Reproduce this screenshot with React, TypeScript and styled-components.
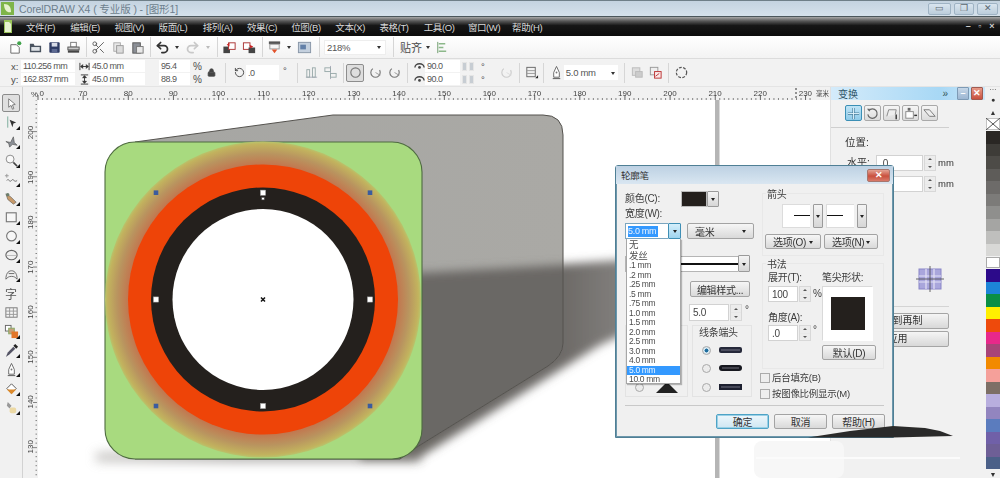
import React from "react";
import styled, { createGlobalStyle } from "styled-components";
import { Scissors, Undo2, Redo2, Lock, RotateCcw } from "lucide-react";

const CJK = `"Liberation Sans", "Noto Sans CJK SC", sans-serif`;

const Global = createGlobalStyle`
  html, body { margin: 0; padding: 0; background: #fff; overflow: hidden; }
  #root { width: 1000px; height: 478px; }
  * { box-sizing: border-box; }
`;

const Shell = styled.div`
  position: relative; width: 1000px; height: 478px; overflow: hidden;
  display: flex; flex-direction: column;
  font-family: ${CJK}; font-size: 10px; color: #444;
  filter: blur(0.4px);
`;

/* ---------- title + menu ---------- */
const TitleBar = styled.div`
  height: 17px; flex: none; display: flex; align-items: center;
  padding: 0 2px 0 1px;
  border-top: 1px solid #6f7f88; border-bottom: 1px solid #4b565b;
  background: linear-gradient(#c4d3e0, #d5e1eb);
`;
const AppLogo = styled.svg` width: 13px; height: 13px; flex: none; `;
const TitleText = styled.span` margin-left: 5px; font-size: 10.5px; color: #6d7f8d; flex: 1; letter-spacing: -.1px; `;
const WinBtn = styled.div<{ $w: number }>`
  width: ${p => p.$w}px; height: 12px; margin-left: 3px; border: 1px solid #9fb3c4; border-radius: 2px;
  background: linear-gradient(#d9e5ef, #bccddb); color: #5b6770;
  display: flex; align-items: center; justify-content: center; font-size: 9px; line-height: 1;
`;
const MenuBar = styled.div`
  height: 19px; flex: none; display: flex; align-items: center; padding-left: 4px;
  background: linear-gradient(#a8a8a8 0, #555 22%, #161616 45%, #0c0c0c 100%);
  color: #d8d8d8; font-size: 9.5px; letter-spacing: -.4px;
`;
const MenuLogo = styled.svg` width: 8px; height: 13px; margin-right: 6px; flex: none; `;
const MenuItem = styled.span`
  width: 44.2px; flex: none; white-space: nowrap; margin-left: 0;
  &:first-of-type { margin-left: 8px; }
`;
const MenuRight = styled.div`
  margin-left: auto; display: flex; gap: 8px; padding-right: 6px; color: #ccc; font-size: 9px; font-weight: bold; line-height: 1;
`;

/* ---------- toolbars ---------- */
const Toolbar = styled.div`
  height: 23px; flex: none; display: flex; align-items: center; padding-left: 5px;
  background: linear-gradient(#fff, #f3f3f3); border-bottom: 1px solid #dcdcdc;
`;
const PropBar = styled.div`
  height: 28px; flex: none; display: flex; align-items: center; padding-left: 11px;
  background: #f2f2f2; border-bottom: 1px solid #e4e4e4;
`;
const Tool = styled.div<{ $w?: number; $active?: boolean }>`
  width: ${p => p.$w ?? 19}px; height: 18px; flex: none;
  display: flex; align-items: center; justify-content: center;
  ${p => p.$active ? "border: 1px solid #8d8d8d; border-radius: 2px; background: #dedede;" : ""}
`;
const Sep = styled.div<{ $w: number }>`
  width: ${p => p.$w}px; height: 20px; flex: none; position: relative;
  &::after { content: ""; position: absolute; left: 50%; top: 0; bottom: 0; width: 1px; background: #d6d6d6; }
`;
const Caret = styled.div<{ $w?: number; $light?: boolean }>`
  width: ${p => p.$w ?? 10}px; height: 14px; flex: none; display: flex; align-items: center; justify-content: center;
  &::after { content: ""; border: 2.5px solid transparent; border-top: 3px solid ${p => p.$light ? "#bbb" : "#333"}; margin-top: 3px; }
`;
const ZoomCombo = styled.div<{ $w?: number; $plain?: boolean }>`
  width: ${p => p.$w ?? 62}px; height: 15px; flex: none; background: #fff; border: ${p => p.$plain ? "0" : "1px solid #eee"};
  display: flex; align-items: center; justify-content: space-between; padding-left: 2px; font-size: 9.5px; color: #555; letter-spacing: -.3px;
`;
const Label = styled.span<{ $w?: number; $size?: number; $color?: string; $ml?: number; $lift?: number }>`
  ${p => p.$w ? `width: ${p.$w}px;` : ""} flex: none; white-space: nowrap;
  font-size: ${p => p.$size ?? 9.5}px; color: ${p => p.$color ?? "#4b4b4b"};
  margin-left: ${p => p.$ml ?? 0}px; margin-bottom: ${p => p.$lift ?? 0}px;
`;
const Stack = styled.div` display: flex; flex-direction: column; gap: 1px; flex: none; `;
const Row = styled.div<{ $ml?: number }>` display: flex; align-items: center; height: 12px; ${p => p.$ml ? `margin-left:${p.$ml}px;` : ""} `;
const Field = styled.div<{ $w: number; $h?: number }>`
  width: ${p => p.$w}px; height: ${p => p.$h ?? 12}px; flex: none; background: #fff; padding-left: 2px;
  display: flex; align-items: center; justify-content: space-between; white-space: nowrap; font-size: 9px; letter-spacing: -.5px; color: #555;
`;
const Gap = styled.div<{ $w: number }>` width: ${p => p.$w}px; flex: none; `;
const MiniSpin = styled.div`
  width: 5px; height: 9px; margin-left: 2px; flex: none; background: #c7cdd3; border: 1px solid #e5e5e5;
`;

/* ---------- workspace ---------- */
const Main = styled.div` flex: 1; display: flex; min-height: 0; `;
const Toolbox = styled.div`
  width: 23px; flex: none; background: #f1f1f1; border-right: 1px solid #d2d2d2;
  padding-top: 7px; display: flex; flex-direction: column; align-items: center;
`;
const Slot = styled.div<{ $fly?: boolean; $active?: boolean }>`
  width: 18px; height: 19px; flex: none; position: relative; display: flex; align-items: center; justify-content: center;
  ${p => p.$active ? "border: 1px solid #8b8b8b; background: #dfdfdf; border-radius: 2px; height: 18px; margin-bottom: 1px;" : ""}
  ${p => p.$fly ? `&::after { content: ""; position: absolute; right: 0; bottom: 2px; border: 2px solid transparent; border-right-color: #111; border-bottom-color: #111; }` : ""}
`;
const Work = styled.div` flex: 1; display: flex; flex-direction: column; min-width: 0; `;
const RulerTop = styled.svg` width: 807px; height: 13px; flex: none; display: block; background: #f1f1f1; `;
const WorkBody = styled.div` flex: 1; display: flex; min-height: 0; `;
const RulerLeft = styled.svg` width: 15px; height: 378px; flex: none; display: block; background: #f1f1f1; `;
const Canvas = styled.svg` width: 792px; height: 378px; flex: none; display: block; background: #fff; `;

const Dock = styled.div`
  width: 155px; flex: none; background: #f1f1f1; display: flex; flex-direction: column; border-left: 1px solid #e0e0e0;
`;
const DockHead = styled.div`
  height: 13px; flex: none; display: flex; align-items: center; padding-left: 7px;
  background: linear-gradient(90deg, #d4ebfa, #a8d8f5 70%, #cbe6f8);
  font-size: 10px; color: #2f5568;
`;
const DockName = styled.span` flex: 1; `;
const DockBtn = styled.div<{ $red?: boolean }>`
  width: 12px; height: 13px; margin-left: 2px; flex: none; border-radius: 1px; border: 1px solid ${p => p.$red ? "#a05a50" : "#7d9ab5"};
  background: ${p => p.$red ? "linear-gradient(#e89a88,#c8503f)" : "linear-gradient(#c6d7e8,#9cb6d2)"};
  color: #fff; display: flex; align-items: center; justify-content: center; font-size: 9px; line-height: 1; font-weight: bold;
`;
const DockTabs = styled.div`
  display: flex; gap: 2px; padding: 5px 0 6px 14px; margin: 0 36px 0 0; border-bottom: 1px solid #cfcfcf;
`;
const DockTab = styled.div<{ $on?: boolean }>`
  width: 17px; height: 16px; flex: none; border-radius: 2px; display: flex; align-items: center; justify-content: center;
  border: 1px solid ${p => p.$on ? "#3b8fb5" : "#a9a9a9"}; background: ${p => p.$on ? "linear-gradient(#bfe4f6,#8fcbe9)" : "linear-gradient(#f5f5f5,#dcdcdc)"};
`;
const DockTitle = styled.div` margin: 6px 0 0 14px; font-size: 10.5px; color: #333; line-height: 16px; `;
const DockRow = styled.div` display: flex; align-items: center; height: 16px; margin: 5px 0 0 16px; font-size: 10px; color: #333; `;
const DockTarget = styled.div` height: 86px; flex: none; display: flex; justify-content: flex-end; padding: 74px 41px 0 0; `;
const DockRule = styled.div` height: 1px; margin: 28px 36px 0 20px; background: #d4d4d4; flex: none; `;
const DockButton = styled.div`
  height: 16px; margin: 6px 36px 0 15px; border: 1px solid #a5a5a5; border-radius: 2px;
  background: linear-gradient(#f5f5f5,#d8d8d8); font-size: 10px; color: #333; line-height: 14px; white-space: nowrap; text-align: center;
  & + & { margin-top: 2px; }
`;
const Palette = styled.div`
  width: 15px; flex: none; background: #f1f1f1; display: flex; flex-direction: column; align-items: stretch; padding-left: 1px;
`;
const Swatch = styled.div<{ $c: string; $h?: number; $white?: boolean }>`
  height: ${p => p.$h ?? 12.5}px; flex: none; background: ${p => p.$c};
  ${p => p.$white ? "margin: 1px 0; border: 1px solid #aaa;" : ""}
`;
const PalBtn = styled.div<{ $h: number }>`
  height: ${p => p.$h}px; flex: none; display: flex; align-items: center; justify-content: center; color: #333; font-size: 7px; line-height: 1;
`;
const NoColor = styled.svg` width: 14px; height: 12px; display: block; flex: none; margin-bottom: 1px; `;

/* ---------- dialog ---------- */
const Dialog = styled.div`
  position: absolute; left: 615px; top: 165px; width: 279px; height: 273px;
  background: #f0f0f0; border: 1px solid #4f7f95; border-radius: 3px 3px 0 0;
  box-shadow: 0 0 0 1px #6d97ab inset; display: flex; flex-direction: column; color: #3d3d3d; letter-spacing: -.3px;
`;
const DlgTitle = styled.div`
  height: 18px; flex: none; display: flex; align-items: center; justify-content: space-between; padding: 0 3px 0 5px;
  background: linear-gradient(#bdd1e3, #d9e6f1); font-size: 9.5px; color: #333;
`;
const DlgClose = styled.div`
  width: 23px; height: 13px; border-radius: 2px; border: 1px solid #a7766e; background: linear-gradient(#e4a394, #c9503e 55%, #d97a6a);
  color: #fff; font-size: 9px; font-weight: bold; display: flex; align-items: center; justify-content: center; line-height: 1;
`;
const DlgBody = styled.div` flex: 1; display: flex; position: relative; padding: 7px 0 0 9px; `;
const Left = styled.div` width: 137px; flex: none; display: flex; flex-direction: column; `;
const Right = styled.div` width: 122px; flex: none; display: flex; flex-direction: column; margin-top: 2px; `;
const DRow = styled.div<{ $h: number; $mt?: number; $ml?: number; $gap?: number; $top?: boolean }>`
  display: flex; align-items: ${p => p.$top ? "flex-start" : "center"}; flex: none; height: ${p => p.$h}px;
  margin-top: ${p => p.$mt ?? 0}px; margin-left: ${p => p.$ml ?? 0}px; gap: ${p => p.$gap ?? 0}px;
`;
const DText = styled.span<{ $w?: number; $size?: number; $ml?: number; $mt?: number; $lift?: number; $lh?: number }>`
  ${p => p.$w ? `width:${p.$w}px;` : ""} flex: none; font-size: ${p => p.$size ?? 10}px; white-space: nowrap;
  line-height: ${p => p.$lh ? `${p.$lh}px` : 1};
  margin-left: ${p => p.$ml ?? 0}px; margin-top: ${p => p.$mt ?? 0}px; margin-bottom: ${p => p.$lift ?? 0}px;
`;
const ColorWell = styled.div`
  width: 26px; height: 16px; flex: none; background: #24201d; border: 1px solid #bbb;
`;
const DropBtn = styled.div<{ $w?: number; $h?: number; $hot?: boolean }>`
  width: ${p => p.$w ?? 12}px; height: ${p => p.$h ?? 16}px; flex: none; display: flex; align-items: center; justify-content: center;
  border: 1px solid ${p => p.$hot ? "#3f8fb5" : "#9a9a9a"}; border-radius: 1px;
  background: ${p => p.$hot ? "linear-gradient(#d5effb,#9fd4ee)" : "linear-gradient(#f4f4f4,#d6d6d6)"};
  &::after { content: ""; border: 2.5px solid transparent; border-top: 3px solid #222; margin-top: 3px; }
`;
const WidthInput = styled.div`
  width: 43px; height: 16px; flex: none; background: #fff; border: 1px solid #7aa5bf; border-right: 0; padding: 2px 0 0 2px;
`;
const Hilite = styled.span` background: #3399ff; color: #e8f3ff; font-size: 9px; line-height: 11px; display: block; width: 30px; white-space: nowrap; `;
const Btn = styled.div<{ $w: number; $h?: number; $primary?: boolean; $between?: boolean; $mt?: number }>`
  width: ${p => p.$w}px; height: ${p => p.$h ?? 15}px; flex: none; border-radius: 2px; padding: 0 7px;
  margin-top: ${p => p.$mt ?? 0}px;
  border: 1px solid ${p => p.$primary ? "#4ea3c6" : "#a3a3a3"};
  background: ${p => p.$primary ? "linear-gradient(#edf7fc,#cfe6f2)" : "linear-gradient(#f6f6f6,#d9d9d9)"};
  display: flex; align-items: center; justify-content: ${p => p.$between ? "space-between" : "center"};
  font-size: 10px; color: #333; white-space: nowrap;
  ${p => p.$primary ? "box-shadow: 0 0 0 1px #9ad0e6 inset;" : ""}
`;
const MiniCaret = styled.i`
  border: 2.5px solid transparent; border-top: 3px solid #222; margin-top: 3px; display: block; width: 0; height: 0;
`;
const LineField = styled.div`
  width: 113px; height: 16px; flex: none; background: #fff; border: 1px solid #b5b5b5; border-right: 0; display: flex; align-items: center;
  &::after { content: ""; display: block; width: 100%; height: 2px; background: #111; }
`;
const TextBox = styled.div<{ $w: number; $h?: number }>`
  width: ${p => p.$w}px; height: ${p => p.$h ?? 16}px; flex: none; background: #fff; border: 1px solid #d2d2d2;
  padding-left: 3px; font-size: 10px; display: flex; align-items: center; color: #444;
`;
const Spin = styled.div<{ $h?: number }>`
  width: 12px; height: ${p => p.$h ?? 16}px; flex: none; display: flex; flex-direction: column; gap: 1px; background: #e8e8e8; border: 1px solid #d8d8d8;
  margin-left: 1px;
`;
const SpinPart = styled.i<{ $down?: boolean }>`
  flex: 1; display: flex; align-items: center; justify-content: center; background: #ececec;
  &::after { content: ""; border: 2px solid transparent; ${p => p.$down ? "border-top: 2px solid #555; margin-top: 2px;" : "border-bottom: 2px solid #555; margin-bottom: 2px;"} }
`;
const Bottoms = styled.div` display: flex; margin-top: 4px; height: 72px; flex: none; gap: 4px; `;
const Box = styled.div<{ $w: number }>`
  width: ${p => p.$w}px; flex: none; border: 1px solid #e3e3e3; position: relative; display: flex; flex-direction: column; align-items: center;
`;
const BoxLegend = styled.span`
  position: absolute; left: 5px; top: 1px; background: #f0f0f0; padding: 0 1px; font-size: 10px; line-height: 12px; white-space: nowrap;
`;
const CapRow = styled.div<{ $mt: number; $gap?: number }>` display: flex; align-items: center; gap: ${p => p.$gap ?? 8}px; margin-top: ${p => p.$mt}px; height: 12px; flex: none; `;
const Radio = styled.div<{ $on?: boolean }>`
  width: 9px; height: 9px; flex: none; border-radius: 50%; border: 1px solid #a8a8a8; background: ${p => p.$on ? "radial-gradient(#1e6d9e 35%, #d7e8f1 45%)" : "#ececec"};
`;
const Cap = styled.svg` width: 23px; height: 7px; display: block; flex: none; `;
const ArrowCell = styled.div`
  width: 28px; height: 24px; flex: none; background: #fff; border: 1px solid #dcdcdc; border-right: 0; display: flex; align-items: center; justify-content: flex-end;
  &::after { content: ""; display: block; width: 16px; height: 1.5px; background: #111; }
`;
const ArrowCellR = styled(ArrowCell)` justify-content: flex-start; `;
const Group = styled.div<{ $h: number; $mt?: number }>`
  height: ${p => p.$h}px; flex: none; border: 1px solid #e8e8e8; position: relative; padding: 8px 2px 0; display: flex; flex-direction: column;
  margin-top: ${p => p.$mt ?? 0}px;
`;
const Legend = styled.span`
  position: absolute; left: 3px; top: -5px; background: #f0f0f0; font-size: 10px; padding: 0 1px; line-height: 12px;
`;
const NibCol = styled.div` display: flex; flex-direction: column; width: 54px; flex: none; `;
const ValCol = styled.div` display: flex; flex-direction: column; width: 57px; flex: none; `;
const Nib = styled.div`
  width: 51px; height: 55px; flex: none; margin-top: 2px; background: #fff; border: 1px solid #d9d9d9; border-right-color: #fff; border-bottom-color: #fff; display: flex; align-items: center; justify-content: center;
  &::after { content: ""; display: block; width: 34px; height: 33px; background: #24201d; }
`;
const CheckRow = styled(DRow)` margin-left: -2px; `;
const Check = styled.div` width: 10px; height: 10px; flex: none; border: 1px solid #ababab; background: #eee; `;
const DlgRule = styled.div` height: 1px; flex: none; margin: 0 9px 0 9px; background: #c9c9c9; `;
const DlgFoot = styled.div` height: 31px; flex: none; display: flex; justify-content: flex-end; gap: 5px; padding: 8px 8px 0 0; `;
const List = styled.div`
  position: absolute; left: 10px; top: 55px; width: 55px; height: 145px; background: #fff; border: 1px solid #a7a7a7; border-width: 0 1px 1px 1px;
  box-shadow: 1px 1px 1px rgba(0,0,0,.25); padding-top: 1px; font-size: 8.5px; letter-spacing: -.35px; color: #4d4d4d;
`;
const ListItem = styled.div<{ $sel?: boolean; $big?: boolean }>`
  height: ${p => p.$big ? 10.5 : 9.5}px; line-height: ${p => p.$big ? 10.5 : 9.5}px; padding-left: 2px; white-space: nowrap;
  font-size: ${p => p.$big ? 9.5 : 8.5}px;
  ${p => p.$sel ? "background: #3399ff; color: #eaf5ff;" : ""}
`;
const Ink = styled.svg` position: absolute; left: 740px; top: 420px; width: 230px; height: 58px; pointer-events: none; `;

/* ---------- icons ---------- */
const S = styled.svg<{ $s?: number; $turn?: boolean }>`
  width: ${p => p.$s ?? 15}px; height: ${p => p.$s ?? 15}px; display: block; flex: none;
  ${p => p.$turn ? "transform: rotate(90deg);" : ""}
`;
const Ic = ({ children, s }: { children: React.ReactNode; s?: number }) => <S $s={s} viewBox="0 0 16 16">{children}</S>;

const New = () => <Ic><path d="M3 5h6l3 3v6H3z" fill="#fff" stroke="#666" /><circle cx="12" cy="3.5" r="2.2" fill="#3fa34a" /></Ic>;
const Open = () => <Ic><path d="M2 13V4h4l1 2h7v7z" fill="#48525e" /><rect x="3.5" y="7.5" width="9" height="4" fill="#dfe3e7" /></Ic>;
const Save = () => <Ic><rect x="2.5" y="2.5" width="11" height="11" rx="1" fill="#2d3a63" /><rect x="5" y="3" width="6" height="4" fill="#d7dbe6" /><rect x="5" y="9.5" width="6" height="4" fill="#5d6a92" /></Ic>;
const Print = () => <Ic><rect x="5" y="2.5" width="6" height="5" fill="#fff" stroke="#777" /><rect x="2" y="7.5" width="12" height="3" fill="#c9c9c9" stroke="#555" /><rect x="2" y="11" width="12" height="2.5" fill="#444" /></Ic>;
const Copy = () => <Ic><rect x="3" y="3" width="7" height="9" fill="#e9e9e9" stroke="#aaa" /><rect x="6" y="6" width="7" height="8" fill="#dcdcdc" stroke="#999" /></Ic>;
const Paste = () => <Ic><rect x="3" y="3" width="8" height="11" fill="#8b8f96" stroke="#555" /><rect x="7" y="7" width="7" height="7" fill="#e9e9e9" stroke="#777" /></Ic>;
const Imp = () => <Ic><rect x="1.5" y="7" width="7" height="7" fill="#444" /><rect x="7" y="3" width="7" height="7" fill="#fff" stroke="#a33" /><path d="M5 5l3-2v4z" fill="#c22" /></Ic>;
const Exp = () => <Ic><rect x="1.5" y="3" width="7" height="7" fill="#fff" stroke="#a33" /><rect x="7" y="8" width="7" height="6" fill="#444" /><path d="M8 5l4 2-3 2z" fill="#c22" /></Ic>;
const Pub = () => <Ic><rect x="2" y="1.5" width="12" height="3" fill="#555" /><rect x="3" y="4.5" width="10" height="5" fill="#f6f6f6" stroke="#999" /><path d="M5 10h6l-3 4z" fill="#e2522c" /></Ic>;
const Welcome = () => <Ic><rect x="1.5" y="2.5" width="13" height="11" fill="#c4d0de" stroke="#8795a6" /><rect x="3.5" y="5" width="6" height="5" fill="#6380a8" /></Ic>;
const Snap = () => <Ic><path d="M4 2v12" stroke="#6d9a6a" /><path d="M5 4h7M5 8h5M5 12h8" stroke="#8cb88a" strokeWidth="1.4" /></Ic>;
const Align = () => <Ic><path d="M2 13h12" stroke="#aab" /><rect x="3" y="5" width="3" height="8" fill="none" stroke="#9aa" /><rect x="9" y="3" width="3" height="10" fill="none" stroke="#9aa" /></Ic>;
const Dist = () => <Ic><path d="M8 1v14" stroke="#aab" /><rect x="2" y="3" width="6" height="4" fill="none" stroke="#9aa" /><rect x="8" y="9" width="6" height="4" fill="none" stroke="#9aa" /></Ic>;
const Ring = ({ dash, light }: { dash?: boolean; light?: boolean }) => <Ic><circle cx="8" cy="8" r="5" fill="none" stroke={light ? "#ccc" : "#777"} strokeWidth="1.2" strokeDasharray={dash ? "20 8" : undefined} />{dash && <path d="M8 8l5 3" stroke={light ? "#ddd" : "#999"} />}</Ic>;
const WH = ({ v }: { v?: boolean }) => <S $s={11} $turn={v} viewBox="0 0 12 12"><path d="M1 2v8M11 2v8M2 6h8M2 6l2-2v4zM10 6l-2-2v4z" stroke="#333" fill="#333" /></S>;
const Eye = () => <S $s={11} viewBox="0 0 12 12"><path d="M1 7a5 4 0 0 1 10 0" fill="none" stroke="#444" strokeWidth="1.5" /><circle cx="6" cy="7" r="1.5" fill="#444" /></S>;
const Frame = () => <Ic><rect x="3" y="2.5" width="9" height="10" fill="none" stroke="#666" /><path d="M3 6h9M3 9h9" stroke="#999" /><path d="M12 14h3v-3z" fill="#222" /></Ic>;
const Pen = () => <Ic><path d="M8 1.5L11 8v5H5V8z" fill="#fff" stroke="#666" /><path d="M4 14.5h8" stroke="#555" /><circle cx="8" cy="8" r="1" fill="#777" /></Ic>;
const Shap1 = () => <Ic><rect x="2.5" y="3" width="8" height="8" fill="#ddd" stroke="#bbb" /><rect x="6" y="7" width="7" height="6" fill="#ccc" stroke="#bbb" /></Ic>;
const Shap2 = () => <Ic><rect x="2.5" y="2.5" width="8" height="8" fill="#eee" stroke="#999" /><rect x="7" y="7" width="7" height="7" fill="#fbe6e6" stroke="#b33" /><path d="M8 12l4-3" stroke="#b33" /></Ic>;
const Contour = () => <Ic><circle cx="8" cy="8" r="5.5" fill="none" stroke="#555" strokeWidth="1.3" strokeDasharray="3 1.5" /></Ic>;

const Pick = () => <Ic><path d="M5 3l7 6-3 .5 1.5 4-1.5.6L7.5 10 5 12z" fill="#fff" stroke="#777" /></Ic>;
const Shape = () => <Ic><path d="M4 1.5v12" stroke="#7a9" /><path d="M6 5l7 3-3 1-1 4z" fill="#333" /></Ic>;
const Crop = () => <Ic><path d="M2 8l5 1 3-6 1 6 3 3-5-1-3 3-1-4z" fill="#8b8f96" stroke="#444" strokeWidth=".6" /></Ic>;
const Zoom = () => <Ic><circle cx="6.5" cy="6.5" r="4.2" fill="#f9f9f9" stroke="#888" /><path d="M10 10l4 4" stroke="#444" strokeWidth="1.6" /></Ic>;
const Free = () => <Ic><path d="M1 4h4M3 2v4" stroke="#999" /><path d="M3 9c2-3 3 3 5 0s3 3 6 0" fill="none" stroke="#666" /></Ic>;
const Smart = () => <Ic><path d="M2 3l5 3 6 6-3 2-6-5z" fill="#c79a6a" stroke="#555" strokeWidth=".6" /><circle cx="4" cy="4" r="1.8" fill="#6b7d6b" /></Ic>;
const Rect = () => <Ic><rect x="2.5" y="3" width="10.5" height="9.5" fill="#f7f7f7" stroke="#777" strokeWidth="1.2" /></Ic>;
const Ell = () => <Ic><circle cx="8" cy="7.5" r="5.2" fill="#f7f7f7" stroke="#777" strokeWidth="1.2" /></Ic>;
const Poly = () => <Ic><ellipse cx="8" cy="7.5" rx="6" ry="5" fill="#f0f0f0" stroke="#666" strokeWidth="1.2" /><path d="M3 8h10" stroke="#bbb" /></Ic>;
const Basic = () => <Ic><path d="M2 13c0-5 2-9 6-9s6 4 6 9c-2-2-3-3-6-3s-4 1-6 3z" fill="none" stroke="#666" /><path d="M5 7h6" stroke="#666" /></Ic>;
const Grid = () => <Ic><rect x="2" y="3" width="12" height="10" fill="#f4f4f4" stroke="#777" /><path d="M6 3v10M10 3v10M2 6.5h12M2 10h12" stroke="#999" /></Ic>;
const Blend = () => <Ic><rect x="1.5" y="1.5" width="6" height="6" fill="#fff" stroke="#666" /><rect x="5" y="4.5" width="6" height="6" fill="#c6a07a" stroke="#8a6" /><rect x="8" y="8" width="7" height="7" fill="#e2762a" /></Ic>;
const Dropper = () => <Ic><path d="M2 15l2-5 6-6 2 2-6 6z" fill="#556" /><path d="M10 3l2-2 3 3-2 2z" fill="#222" /></Ic>;
const Fill = () => <Ic><path d="M3 8l5-5 5 5-5 5z" fill="#fff" stroke="#555" /><path d="M3 9l5 5 5-5z" fill="#dc8a2c" /></Ic>;
const IFill = () => <Ic><path d="M4 2l4 4-2 3-3-3z" fill="#999" /><rect x="6" y="8" width="7" height="6" rx="2" fill="#ecd9a4" /></Ic>;
const Zi = () => <Label $size={12} $color="#555">字</Label>;

const TabMove = () => <Ic><path d="M8 2v12M2 8h12" stroke="#4b7f9c" strokeWidth="2.4" /><path d="M8 2v12M2 8h12" stroke="#dff2fb" strokeWidth="1" /></Ic>;
const TabRot = () => <Ic><path d="M4 5a5 5 0 1 1-1 4" fill="none" stroke="#666" strokeWidth="1.3" /><path d="M2 3l3 0 0 3z" fill="#666" /></Ic>;
const TabSca = () => <Ic><path d="M3 11l2-7h8l-1 5" fill="#eee" stroke="#888" /><path d="M13 9v5" stroke="#333" strokeWidth="1.5" /></Ic>;
const TabSize = () => <Ic><rect x="3" y="6" width="8" height="7" fill="#fff" stroke="#888" /><rect x="5" y="2" width="3" height="3" fill="#666" /><path d="M12 10h3" stroke="#333" strokeWidth="1.5" /></Ic>;
const TabSkew = () => <Ic><path d="M2 4h6l6 7H8z" fill="#eee" stroke="#777" /></Ic>;

const menus = ["文件(F)", "编辑(E)", "视图(V)", "版面(L)", "排列(A)", "效果(C)", "位图(B)", "文本(X)", "表格(T)", "工具(O)", "窗口(W)", "帮助(H)"];
const sizes = ["无", "发丝", ".1 mm", ".2 mm", ".25 mm", ".5 mm", ".75 mm", "1.0 mm", "1.5 mm", "2.0 mm", "2.5 mm", "3.0 mm", "4.0 mm", "5.0 mm", "10.0 mm"];
const grays = ["#2a2724", "#3e3c38", "#4d4b47", "#5e5c59", "#6d6b69", "#7c7b79", "#8f8f8d", "#a5a5a3", "#bfbfbd", "#d8d8d6"];
const colors = ["#2c0a8a", "#1d84d8", "#0a8f45", "#ffef00", "#ee4a0c", "#e8288a", "#a84478", "#f28a00", "#f5a09a", "#7d6f66", "#b8aede", "#9285bf", "#5b7cbe", "#7060a8", "#6e5f96", "#4b6088"];

const tools: [React.ComponentType, boolean][] = [
  [Pick, false], [Shape, true], [Crop, true], [Zoom, true], [Free, true], [Smart, true], [Rect, true], [Ell, true], [Poly, true],
  [Basic, true], [Zi, false], [Grid, false], [Blend, true], [Dropper, true], [Pen, true], [Fill, true], [IFill, true],
];

const hx = (v: number) => 82 + 4.515 * (v - 70);
const topLabels = [70, 80, 90, 100, 110, 120, 130, 140, 150, 160, 170, 180, 190, 200, 210, 220, 230];
const sideLabels = [200, 190, 180, 170, 160, 150, 140, 130];
const sy = (v: number) => 132.5 + 4.49 * (200 - v);

function TopRuler() {
  const ticks: React.ReactNode[] = [];
  for (let i = 0; i < 180; i++) {
    const x = 37 + i * 4.515;
    if (x > 812) break;
    const major = i % 10 === 0;
    ticks.push(<line key={i} x1={x} x2={x} y1={major ? 95 : 98} y2={100} stroke="#555" strokeWidth={major ? 0.9 : 0.7} />);
  }
  return (
    <RulerTop viewBox="22 87 807 13">
      <text x={30} y={97} fontSize={8} fill="#444">%</text>
      <text x={38.5} y={95.5} fontSize={8} fill="#444">0</text>
      {ticks}
      {topLabels.map(v => <text key={v} x={hx(v)} y={95.5} fontSize={8} fill="#444" textAnchor="middle">{v}</text>)}
      <line x1={795} x2={795} y1={88} y2={100} stroke="#333" strokeDasharray="2 2" />
      <text x={815} y={96} fontSize={6.5} fill="#444">毫米</text>
    </RulerTop>
  );
}
function SideRuler() {
  const ticks: React.ReactNode[] = [];
  for (let i = 0; i < 86; i++) {
    const y = 100 + i * 4.515;
    const major = i % 10 === 7;
    ticks.push(<line key={i} y1={y} y2={y} x1={major ? 33 : 35.5} x2={37} stroke="#555" strokeWidth={0.7} />);
  }
  return (
    <RulerLeft viewBox="23 100 15 378">
      {ticks}
      {sideLabels.map(v => (
        <text key={v} transform={`translate(32.5 ${sy(v)}) rotate(-90)`} fontSize={8} fill="#444" textAnchor="middle">{v}</text>
      ))}
    </RulerLeft>
  );
}

const whiteHandles = [[263, 192.7], [156, 299.5], [370, 299.5], [263, 406]];
const blueHandles = [[156, 192.7], [370, 192.7], [156, 406], [370, 406]];

function Drawing() {
  const back = "M135 142 L333 115 L543 115 Q563 115 563 135 L563 343 Q563 356 548 366 L417 447 L400 459 L135 459 Z";
  return (
    <Canvas viewBox="38 100 792 378">
      <defs>
        <filter id="b5" x="-20%" y="-20%" width="140%" height="140%"><feGaussianBlur stdDeviation="5" /></filter>
        <filter id="b4" x="-20%" y="-300%" width="140%" height="700%"><feGaussianBlur stdDeviation="5.5" /></filter>
        <linearGradient id="shd" gradientUnits="userSpaceOnUse" x1="420" x2="650" y1="0" y2="0">
          <stop offset="0" stopColor="#6a6764" /><stop offset=".62" stopColor="#6d6a67" /><stop offset="1" stopColor="#8c8a88" />
        </linearGradient>
        <linearGradient id="top" x1="0" y1="0" x2="1" y2="0">
          <stop offset="0" stopColor="#a6a6a3" /><stop offset="1" stopColor="#aaa9a5" />
        </linearGradient>
        <linearGradient id="floor" gradientUnits="userSpaceOnUse" x1="92" x2="240" y1="0" y2="0">
          <stop offset="0" stopColor="#b8b6b3" /><stop offset="1" stopColor="#8a8784" />
        </linearGradient>
        <radialGradient id="halo" gradientUnits="userSpaceOnUse" cx="263" cy="299.5" r="158.5">
          <stop offset=".85" stopColor="#c2764f" />
          <stop offset=".92" stopColor="#b9945f" />
          <stop offset=".98" stopColor="#c2b35e" />
          <stop offset="1" stopColor="#b6c76e" />
        </radialGradient>
        <clipPath id="bk"><path d={back} /></clipPath>
      </defs>
      <path d="M96 452 H420 V462 H96 Z" fill="url(#floor)" opacity=".7" filter="url(#b4)" />
      <path d="M420 274 L650 258 L650 322 L600 345 L417 459 L360 459 L360 280 Z" fill="url(#shd)" filter="url(#b5)" />
      <path d={back} fill="url(#top)" />
      <g clipPath="url(#bk)">
        <path d="M400 274 L650 260 L650 400 L400 480 Z" fill="#6b6865" filter="url(#b5)" />
      </g>
      <path d={back} fill="none" stroke="#55534f" strokeWidth="1" />
      <rect x="105" y="142" width="317" height="317" rx="30" fill="#a8da7f" stroke="#4e6b40" strokeWidth="1.1" />
      <circle cx="263" cy="299.5" r="158" fill="url(#halo)" />
      <circle cx="263" cy="299.5" r="135" fill="#ee4408" />
      <circle cx="263" cy="299.5" r="112" fill="#24201d" />
      <circle cx="263" cy="299.5" r="90.5" fill="#fff" />
      {whiteHandles.map(([x, y]) => <rect key={`${x}${y}`} x={x - 2.6} y={y - 2.6} width={5.2} height={5.2} fill="#fff" stroke="#999" strokeWidth=".5" />)}
      {blueHandles.map(([x, y]) => <rect key={`${x}${y}`} x={x - 2.3} y={y - 2.3} width={4.6} height={4.6} fill="#3c5c9e" />)}
      <rect x="261.7" y="197.3" width="2.6" height="2.6" fill="#fff" stroke="#444" strokeWidth=".6" />
      <path d="M261 297.5l4 4M265 297.5l-4 4" stroke="#111" strokeWidth="1.5" />
      <rect x="715" y="100" width="4.5" height="378" fill="#b5b5b5" />
    </Canvas>
  );
}

export default function App() {
  return (
    <Shell>
      <Global />
      <TitleBar>
        <AppLogo viewBox="0 0 13 13">
          <rect width="13" height="13" fill="#7fb54a" />
          <path d="M3 2c5 0 7 3 7 8-3 1-7-1-7-8z" fill="#e7f2cf" />
        </AppLogo>
        <TitleText>CorelDRAW X4 ( 专业版 ) - [图形1]</TitleText>
        <WinBtn $w={23}>▭</WinBtn>
        <WinBtn $w={20}>❐</WinBtn>
        <WinBtn $w={21}>✕</WinBtn>
      </TitleBar>
      <MenuBar>
        <MenuLogo viewBox="0 0 8 13"><rect width="8" height="13" fill="#9ac45a" /><path d="M1 2h4l2 2v8H1z" fill="#e6f1cf" /></MenuLogo>
        {menus.map(m => <MenuItem key={m}>{m}</MenuItem>)}
        <MenuRight><span>–</span><span>▫</span><span>×</span></MenuRight>
      </MenuBar>

      <Toolbar>
        <Tool $w={20}><New /></Tool>
        <Tool $w={20}><Open /></Tool>
        <Tool><Save /></Tool>
        <Tool><Print /></Tool>
        <Sep $w={5} />
        <Tool $w={21}><Scissors size={15} color="#555" strokeWidth={1.4} /></Tool>
        <Tool><Copy /></Tool>
        <Tool><Paste /></Tool>
        <Sep $w={6} />
        <Tool><Undo2 size={15} color="#333" strokeWidth={2.8} /></Tool>
        <Caret />
        <Tool $w={20}><Redo2 size={15} color="#c9c9c9" strokeWidth={2.8} /></Tool>
        <Caret $w={12} $light />
        <Sep $w={6} />
        <Tool><Imp /></Tool>
        <Tool $w={20}><Exp /></Tool>
        <Sep $w={6} />
        <Tool $w={18}><Pub /></Tool>
        <Caret $w={12} />
        <Tool $w={18}><Welcome /></Tool>
        <Sep $w={11} />
        <ZoomCombo>218%<Caret $w={12} /></ZoomCombo>
        <Sep $w={14} />
        <Label $w={24} $size={11}>贴齐</Label>
        <Caret $w={8} />
        <Tool $w={18}><Snap /></Tool>
      </Toolbar>

      <PropBar>
        <Stack>
          <Row><Label $w={10}>x:</Label><Field $w={54}>110.256 mm</Field></Row>
          <Row><Label $w={10}>y:</Label><Field $w={54}>162.837 mm</Field></Row>
        </Stack>
        <Stack>
          <Row $ml={4}><WH /><Field $w={55}>45.0 mm</Field></Row>
          <Row $ml={4}><WH v /><Field $w={55}>45.0 mm</Field></Row>
        </Stack>
        <Stack>
          <Row $ml={14}><Field $w={31}>95.4</Field><Label $w={8} $size={10} $ml={3}>%</Label></Row>
          <Row $ml={14}><Field $w={31}>88.9</Field><Label $w={8} $size={10} $ml={3}>%</Label></Row>
        </Stack>
        <Tool $w={20}><Lock size={9} color="#444" fill="#444" /></Tool>
        <Sep $w={8} />
        <Gap $w={3} />
        <Tool $w={14}><RotateCcw size={11} color="#444" strokeWidth={2} /></Tool>
        <Field $w={33} $h={15}>.0</Field>
        <Label $w={12} $ml={4} $lift={4}>°</Label>
        <Sep $w={4} />
        <Gap $w={3} />
        <Tool $w={19}><Align /></Tool>
        <Tool $w={19}><Dist /></Tool>
        <Sep $w={6} />
        <Tool $w={18} $active><Ring /></Tool>
        <Gap $w={2} />
        <Tool $w={19}><Ring dash /></Tool>
        <Tool $w={19}><Ring dash /></Tool>
        <Sep $w={6} />
        <Stack>
          <Row $ml={4}><Eye /><Field $w={35}>90.0</Field><MiniSpin /><MiniSpin /><Label $ml={7}>°</Label></Row>
          <Row $ml={4}><Eye /><Field $w={35}>90.0</Field><MiniSpin /><MiniSpin /><Label $ml={7}>°</Label></Row>
        </Stack>
        <Gap $w={14} />
        <Tool $w={16}><Ring dash light /></Tool>
        <Sep $w={8} />
        <Tool $w={18}><Frame /></Tool>
        <Sep $w={4} />
        <Gap $w={5} />
        <Tool $w={14}><Pen /></Tool>
        <ZoomCombo $w={54} $plain>5.0 mm<Caret $w={10} /></ZoomCombo>
        <Sep $w={12} />
        <Tool $w={16}><Shap1 /></Tool>
        <Tool $w={19}><Shap2 /></Tool>
        <Sep $w={7} />
        <Tool $w={19}><Contour /></Tool>
      </PropBar>

      <Main>
        <Toolbox>
          {tools.map(([C, fly], i) => <Slot key={i} $fly={fly} $active={i === 0}><C /></Slot>)}
        </Toolbox>
        <Work>
          <TopRuler />
          <WorkBody>
            <SideRuler />
            <Drawing />
          </WorkBody>
        </Work>
        <Dock>
          <DockHead>
            <DockName>变换</DockName>
            <Label $size={10} $color="#355">»</Label>
            <Gap $w={7} />
            <DockBtn>–</DockBtn>
            <DockBtn $red>✕</DockBtn>
            <Gap $w={2} />
          </DockHead>
          <DockTabs>
            <DockTab $on><TabMove /></DockTab>
            <DockTab><TabRot /></DockTab>
            <DockTab><TabSca /></DockTab>
            <DockTab><TabSize /></DockTab>
            <DockTab><TabSkew /></DockTab>
          </DockTabs>
          <DockTitle>位置:</DockTitle>
          <DockRow>
            <DText $w={29}>水平:</DText>
            <TextBox $w={47}>.0</TextBox><Spin><SpinPart /><SpinPart $down /></Spin>
            <DText $size={9.5} $ml={2}>mm</DText>
          </DockRow>
          <DockRow>
            <DText $w={29}>垂直:</DText>
            <TextBox $w={47}>.0</TextBox><Spin><SpinPart /><SpinPart $down /></Spin>
            <DText $size={9.5} $ml={2}>mm</DText>
          </DockRow>
          <DockTarget>
            <svg width="28" height="26" viewBox="0 0 28 26">
              <rect x="3" y="3" width="22" height="20" fill="#a9a6dc" stroke="#8a86c8" />
              <path d="M10 3v20M18 3v20M3 10h22M3 16h22" stroke="#e4e2f6" strokeWidth="1.2" />
              <path d="M14 0v26M0 13h28" stroke="#444" strokeWidth=".8" />
            </svg>
          </DockTarget>
          <DockRule />
          <DockButton>应用到再制</DockButton>
          <DockButton>应用</DockButton>
        </Dock>
        <Palette>
          <PalBtn $h={5}>⋯</PalBtn>
          <PalBtn $h={15}>●</PalBtn>
          <PalBtn $h={11}>▲</PalBtn>
          <NoColor viewBox="0 0 14 12"><rect width="14" height="12" fill="#fff" stroke="#888" /><path d="M0 0l14 12M14 0L0 12" stroke="#555" /></NoColor>
          {grays.map(c => <Swatch key={c} $c={c} />)}
          <Swatch $c="#fff" $h={11} $white />
          {colors.map(c => <Swatch key={c} $c={c} />)}
          <PalBtn $h={10}>▼</PalBtn>
        </Palette>
      </Main>

      <Dialog>
        <DlgTitle>轮廓笔<DlgClose>✕</DlgClose></DlgTitle>
        <DlgBody>
          <Left>
            <DRow $h={16}><DText $w={56}>颜色(C):</DText><ColorWell /><DropBtn /></DRow>
            <DRow $h={14}><DText>宽度(W):</DText></DRow>
            <DRow $h={16} $mt={2}>
              <WidthInput><Hilite>5.0 mm</Hilite></WidthInput>
              <DropBtn $w={13} $hot />
              <Gap $w={6} />
              <Btn $w={67} $h={16} $between>毫米<MiniCaret /></Btn>
            </DRow>
            <DRow $h={17} $mt={16}><LineField /><DropBtn $w={12} $h={17} /></DRow>
            <DRow $h={16} $mt={9} $ml={65}><Btn $w={60} $h={16}>编辑样式...</Btn></DRow>
            <DRow $h={17} $mt={7} $ml={64}>
              <TextBox $w={40} $h={17}>5.0</TextBox>
              <Spin $h={17}><SpinPart /><SpinPart $down /></Spin>
              <DText $ml={3} $lift={6}>°</DText>
            </DRow>
            <Bottoms>
              <Box $w={63}>
                <CapRow $mt={55} $gap={12}>
                  <Radio />
                  <svg width="22" height="11" viewBox="0 0 22 11"><path d="M11 0l11 11H0z" fill="#222" /></svg>
                </CapRow>
              </Box>
              <Box $w={60}>
                <BoxLegend>线条端头</BoxLegend>
                <CapRow $mt={18}><Radio $on /><Cap viewBox="0 0 23 7"><rect width="23" height="6" rx="2" fill="#26293a" /><path d="M2 3h19" stroke="#aab" strokeWidth=".6" /></Cap></CapRow>
                <CapRow $mt={6}><Radio /><Cap viewBox="0 0 23 7"><rect width="23" height="6" rx="3" fill="#17181f" /><path d="M3 3h17" stroke="#aab" strokeWidth=".6" /></Cap></CapRow>
                <CapRow $mt={7}><Radio /><Cap viewBox="0 0 23 7"><rect width="23" height="6" fill="#1d2030" /><path d="M2 3h19" stroke="#aab" strokeWidth=".6" /></Cap></CapRow>
              </Box>
            </Bottoms>
          </Left>
          <Right>
            <Group $h={63}>
              <Legend>箭头</Legend>
              <DRow $h={25} $ml={17} $gap={3} $mt={1}>
                <ArrowCell /><DropBtn $w={10} $h={24} />
                <ArrowCellR /><DropBtn $w={10} $h={24} />
              </DRow>
              <DRow $h={15} $mt={6} $gap={3}>
                <Btn $w={56} $between>选项(O)<MiniCaret /></Btn>
                <Btn $w={54} $between>选项(N)<MiniCaret /></Btn>
              </DRow>
            </Group>
            <Group $h={106} $mt={7}>
              <Legend>书法</Legend>
              <DRow $h={96} $top>
                <ValCol>
                  <DText $ml={3} $lh={12}>展开(T):</DText>
                  <DRow $h={16} $mt={2} $ml={3}>
                    <TextBox $w={30} $h={16}>100</TextBox><Spin><SpinPart /><SpinPart $down /></Spin><DText $ml={2}>%</DText>
                  </DRow>
                  <DText $ml={3} $mt={10} $lh={12}>角度(A):</DText>
                  <DRow $h={16} $mt={1} $ml={3}>
                    <TextBox $w={30} $h={16}>.0</TextBox><Spin><SpinPart /><SpinPart $down /></Spin><DText $ml={2} $lift={6}>°</DText>
                  </DRow>
                </ValCol>
                <NibCol>
                  <DText $lh={12}>笔尖形状:</DText>
                  <Nib />
                  <Btn $w={54} $h={15} $mt={4}>默认(D)</Btn>
                </NibCol>
              </DRow>
            </Group>
            <CheckRow $h={12} $mt={3} $gap={2}><Check /><DText $size={9.5}>后台填充(B)</DText></CheckRow>
            <CheckRow $h={12} $mt={4} $gap={2}><Check /><DText $size={9.5}>按图像比例显示(M)</DText></CheckRow>
          </Right>
          <List>
            {sizes.map((s, i) => <ListItem key={s} $sel={i === 13} $big={i < 2}>{s}</ListItem>)}
          </List>
        </DlgBody>
        <DlgRule />
        <DlgFoot>
          <Btn $w={53} $primary>确定</Btn>
          <Btn $w={53}>取消</Btn>
          <Btn $w={53}>帮助(H)</Btn>
        </DlgFoot>
      </Dialog>

      <Ink viewBox="740 420 230 58">
        <defs><filter id="soft"><feGaussianBlur stdDeviation="0.6" /></filter></defs>
        <rect x="754" y="441" width="90" height="37" rx="8" fill="#f7f7f7" />
        <path d="M756 458h204" stroke="#fbfbfb" strokeWidth="2" />
        <path d="M808 437.5 L850 431 L893 426 L925 428 L940 431 L953 436 L893 437.5 Z" fill="#2c2b29" filter="url(#soft)" />
      </Ink>
    </Shell>
  );
}
